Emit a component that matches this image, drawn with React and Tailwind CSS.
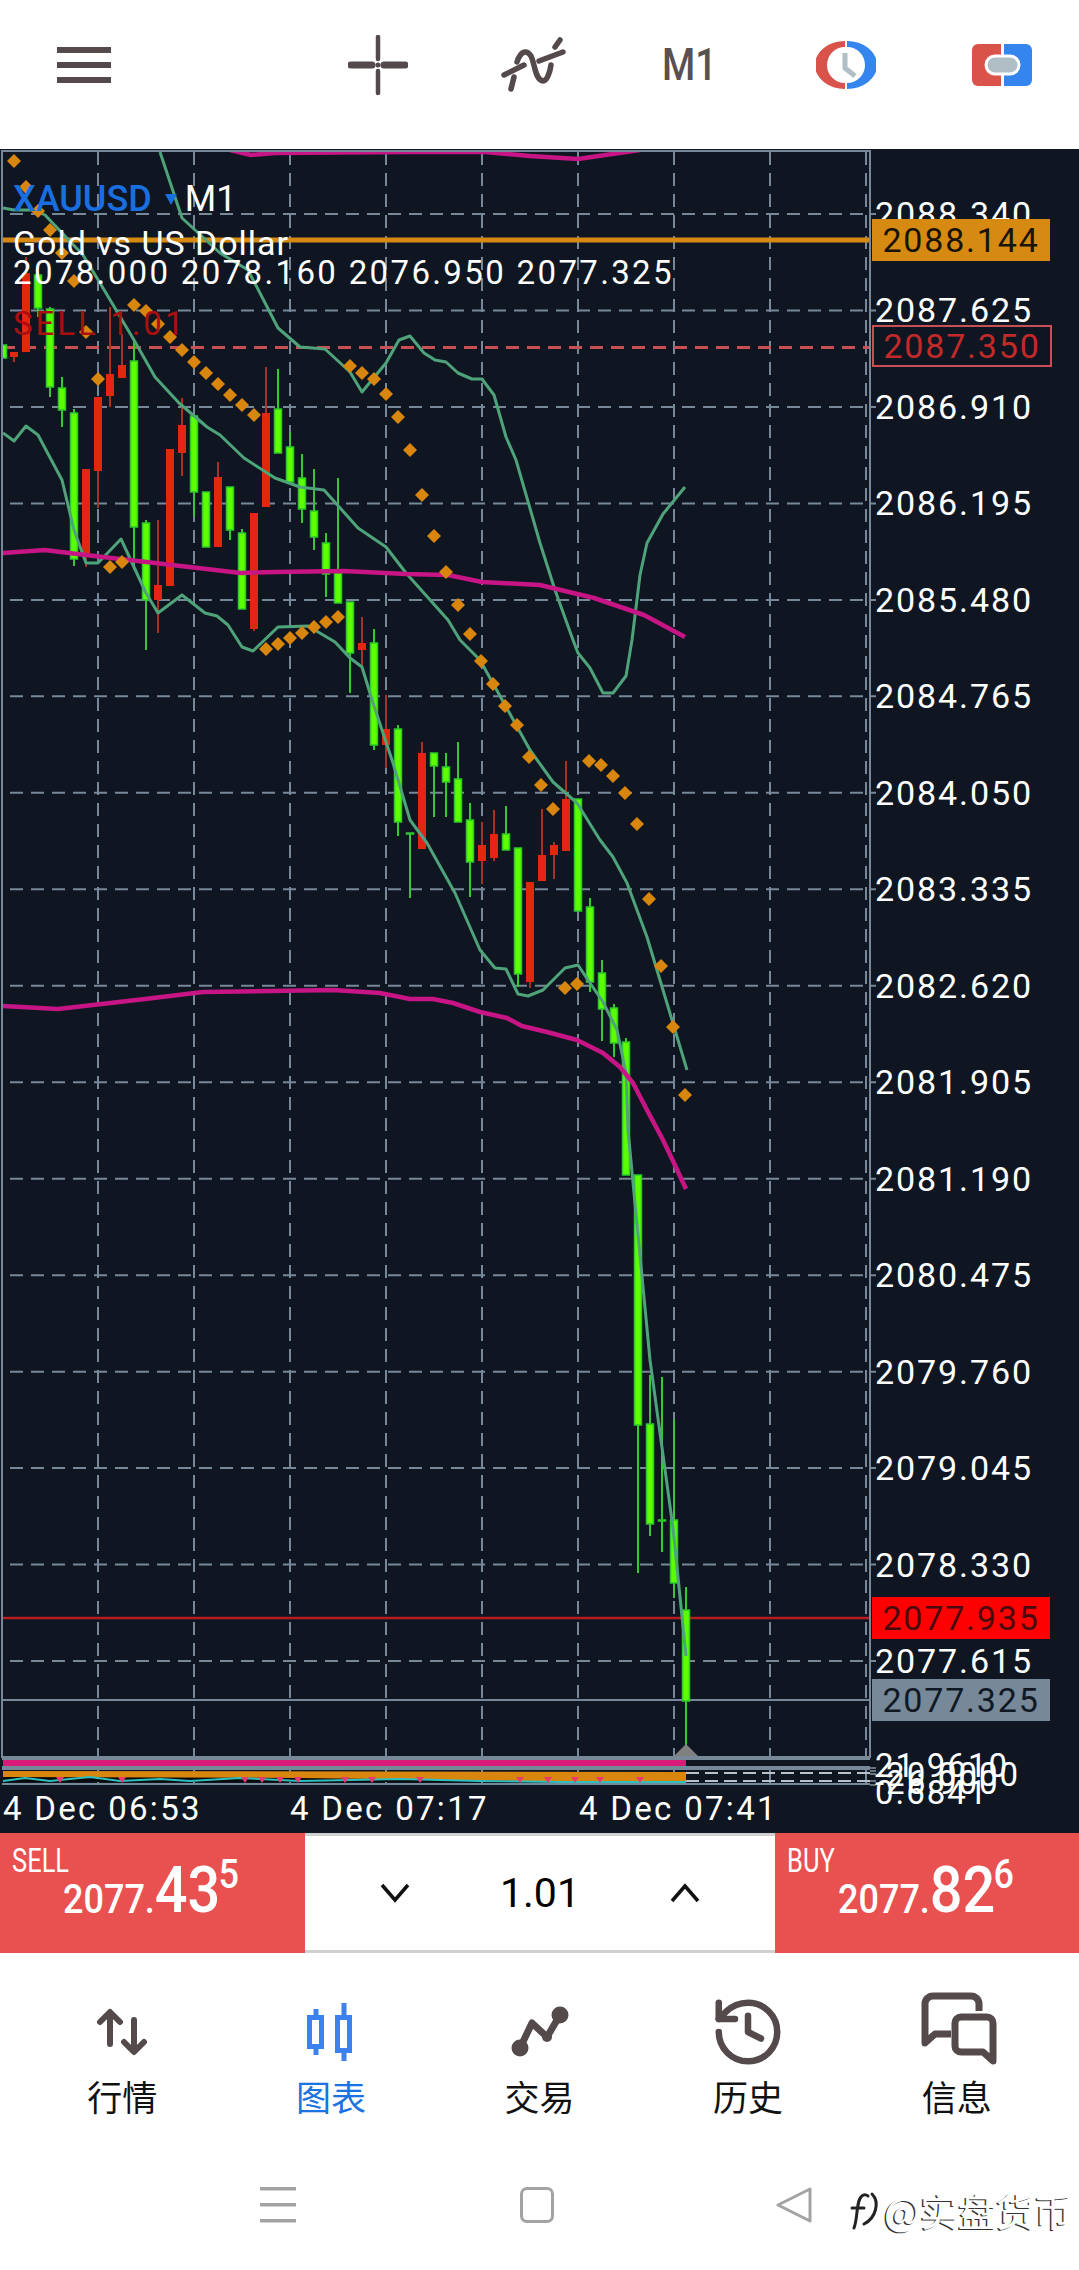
import { History } from 'lucide-react';

const GREY = '#54494b';

// [x, wickTop, bodyTop, bodyBottom, wickBottom, up]
const candles = [
  [3, 345, 345, 358, 358, 1], [14, 352, 352, 357, 362, 0], [26, 257, 273, 352, 352, 0], [38, 272, 275, 308, 317, 1],
  [50, 307, 309, 387, 397, 1], [62, 377, 388, 410, 427, 1], [74, 409, 413, 559, 566, 1], [86, 469, 469, 555, 567, 0],
  [98, 397, 397, 471, 508, 0], [110, 307, 374, 396, 407, 0], [122, 334, 365, 378, 378, 0], [134, 339, 361, 527, 570, 1],
  [146, 520, 523, 600, 650, 1], [158, 520, 585, 600, 633, 0], [170, 449, 449, 586, 586, 0], [182, 398, 425, 453, 476, 0],
  [194, 416, 416, 492, 517, 1], [206, 492, 492, 547, 547, 1], [218, 462, 477, 547, 547, 0], [230, 487, 487, 530, 540, 1],
  [242, 529, 533, 609, 609, 1], [254, 513, 513, 629, 631, 0], [266, 367, 413, 507, 507, 0], [278, 369, 409, 453, 453, 1],
  [290, 432, 447, 482, 482, 1], [302, 454, 478, 509, 523, 1], [314, 469, 511, 537, 550, 1], [326, 533, 543, 574, 597, 1],
  [338, 478, 573, 603, 603, 1], [350, 602, 602, 653, 693, 1], [362, 617, 643, 650, 667, 0], [374, 629, 643, 745, 750, 1],
  [386, 695, 729, 745, 768, 0], [398, 725, 729, 822, 836, 1], [410, 833, 833, 834, 898, 1], [422, 742, 753, 849, 849, 0],
  [434, 753, 753, 766, 817, 1], [446, 753, 767, 782, 817, 1], [458, 742, 779, 822, 822, 1], [470, 803, 820, 862, 897, 1],
  [482, 822, 845, 861, 884, 0], [494, 810, 834, 858, 861, 0], [506, 806, 834, 850, 850, 1], [518, 848, 848, 974, 987, 1],
  [530, 882, 882, 982, 988, 0], [542, 809, 855, 881, 881, 0], [554, 842, 845, 855, 879, 0], [566, 761, 799, 851, 851, 0],
  [578, 799, 799, 911, 911, 1], [590, 898, 907, 982, 992, 1], [602, 960, 973, 1009, 1041, 1], [614, 1004, 1008, 1043, 1057, 1],
  [626, 1038, 1042, 1175, 1175, 1], [638, 1175, 1175, 1425, 1573, 1], [650, 1375, 1424, 1524, 1536, 1], [662, 1377, 1520, 1521, 1552, 1],
  [674, 1419, 1520, 1583, 1598, 1], [686, 1587, 1610, 1701, 1745, 1],
];

const diamonds = [
  [14, 161], [26, 187], [38, 211], [50, 230], [62, 253], [74, 281], [86, 332], [98, 379], [110, 567], [122, 562],
  [134, 305], [146, 311], [158, 324], [170, 337], [182, 350], [194, 362], [206, 373], [218, 384], [230, 395], [242, 405],
  [254, 415], [266, 649], [278, 644], [290, 638], [302, 633], [314, 627], [326, 622], [338, 617], [350, 366], [362, 373],
  [374, 379], [386, 394], [398, 417], [410, 450], [422, 495], [434, 536], [446, 572], [458, 605], [470, 634], [481, 661],
  [493, 684], [505, 706], [517, 725], [529, 757], [541, 785], [553, 809], [565, 988], [577, 984], [589, 761], [601, 765],
  [613, 776], [625, 793], [637, 824], [649, 899], [661, 966], [673, 1027], [685, 1095],
];

const bbUpper = '160,152 182,218 220,253 248,270 278,328 300,347 325,349 350,372 362,392 386,363 399,340 410,336 424,353 435,360 446,362 458,373 472,379 482,379 494,395 506,437 516,460 540,543 555,590 573,640 578,653 590,668 603,693 613,693 626,676 632,640 640,575 647,543 663,514 685,487';
const bbMiddle = '3,208 14,210 34,210 45,215 83,255 100,283 134,340 155,377 179,403 207,427 220,435 244,458 275,478 300,487 324,490 358,528 386,547 406,573 448,620 460,640 480,660 505,705 530,750 553,782 577,803 600,840 613,857 627,883 647,937 663,990 687,1070';
const bbLower = '3,433 14,441 26,426 38,435 62,480 74,530 86,563 98,563 121,539 146,593 158,613 182,595 205,613 217,616 228,625 242,647 253,651 278,627 308,626 335,642 350,658 362,667 373,703 393,763 410,820 427,843 455,893 480,950 495,968 506,969 518,994 528,996 543,990 565,968 578,965 588,980 603,1002 617,1030 626,1073 628,1130 650,1360 673,1528 686,1656';
const maTop = '230,150 251,155 275,153 406,152 485,152 530,156 578,159 619,153 640,150';
const maMid = '3,553 45,550 69,553 103,557 138,561 172,565 241,573 275,572 344,571 406,574 448,575 482,582 540,585 594,598 644,615 685,637';
const maLow = '2,1006 58,1009 145,999 203,992 333,990 380,993 410,999 433,999 453,1003 480,1012 507,1018 522,1026 547,1032 577,1040 603,1053 620,1067 633,1083 647,1110 663,1140 673,1161 686,1189';

const gridX = [98, 194, 290, 386, 482, 578, 674, 770, 866];
const axis = ['2088.340', '2087.625', '2086.910', '2086.195', '2085.480', '2084.765', '2084.050', '2083.335', '2082.620', '2081.905', '2081.190', '2080.475', '2079.760', '2079.045', '2078.330', '2077.615'];
const rowY = (i) => 214 + i * 96.47;

const pinkMarks = [60, 122, 245, 262, 280, 298, 345, 372, 420, 520, 548, 575, 600, 640];

const Chart = () => (
  <svg className="absolute inset-0" width="1079" height="1684" viewBox="0 149 1079 1684">
    <defs>
      <clipPath id="plot">
        <rect x="3" y="152" width="867" height="1604" />
      </clipPath>
    </defs>

    {gridX.map((x) => (
      <g key={x} stroke="#778899" strokeWidth="2">
        <line x1={x} y1="152" x2={x} y2="1756" strokeDasharray="13 8" />
        <line x1={x} y1="1770" x2={x} y2="1790" strokeDasharray="13 8" />
      </g>
    ))}
    {axis.map((_, i) => (
      <line key={i} x1="10" y1={rowY(i)} x2="876" y2={rowY(i)} stroke="#778899" strokeWidth="2" strokeDasharray="13 8" />
    ))}

    <g clipPath="url(#plot)">
      <line x1="2" y1="240" x2="870" y2="240" stroke="#d68a12" strokeWidth="5" />
      <line x1="2" y1="347.5" x2="870" y2="347.5" stroke="#c85054" strokeWidth="3" strokeDasharray="13 8" />
      <line x1="2" y1="1618" x2="870" y2="1618" stroke="#b81c20" strokeWidth="2.5" />
      <line x1="2" y1="1700" x2="870" y2="1700" stroke="#778899" strokeWidth="2" />

      {candles.map(([x, wt, bt, bb, wb, up]) => (
        <g key={x}>
          <line x1={x} y1={wt} x2={x} y2={wb} stroke={up ? '#35c832' : '#a83222'} strokeWidth="2" />
          {up ? (
            <rect x={x - 3.5} y={bt} width="7" height={Math.max(bb - bt, 1)} fill="#5cff00" stroke="#2cc82c" strokeWidth="1.5" />
          ) : (
            <rect x={x - 4} y={bt} width="8" height={Math.max(bb - bt, 1)} fill="#e2260f" />
          )}
        </g>
      ))}

      {[bbUpper, bbMiddle, bbLower].map((p, i) => (
        <polyline key={i} points={p} fill="none" stroke="#4fa37a" strokeWidth="3" strokeLinejoin="round" />
      ))}
      {[maTop, maMid, maLow].map((p, i) => (
        <polyline key={i} points={p} fill="none" stroke="#c71585" strokeWidth="4.5" strokeLinejoin="round" />
      ))}
      {diamonds.map(([x, y]) => (
        <polygon key={`${x}-${y}`} points={`${x},${y - 7} ${x + 7},${y} ${x},${y + 7} ${x - 7},${y}`} fill="#d9860f" />
      ))}
    </g>

    {/* frame */}
    <rect x="2" y="151" width="868" height="1606" fill="none" stroke="#778899" strokeWidth="2" />
    <polygon points="674,1756 686,1744 698,1756" fill="#808080" />

    {/* indicator panels */}
    <rect x="2" y="1756" width="868" height="4" fill="#778899" />
    <rect x="3" y="1760" width="683" height="6" fill="#d81b78" />
    <rect x="2" y="1766" width="868" height="4" fill="#778899" />
    <rect x="3" y="1777" width="683" height="5" fill="#0a0a0a" />
    <polygon points="3,1771 686,1772 686,1783 600,1782 300,1778 3,1777" fill="#d9860f" />
    <polyline points="3,1781 25,1778 50,1781 90,1777 120,1781 160,1779 190,1781 240,1778 300,1781 400,1779 480,1781 560,1782 686,1782" fill="none" stroke="#2fbfc0" strokeWidth="2" />
    {pinkMarks.map((x) => (
      <polygon key={x} points={`${x - 4},1777 ${x + 4},1777 ${x},1783`} fill="#e83a70" />
    ))}
    <line x1="686" y1="1773" x2="870" y2="1773" stroke="#b8c2cc" strokeWidth="2" strokeDasharray="13 6" />
    <line x1="686" y1="1781" x2="870" y2="1781" stroke="#b8c2cc" strokeWidth="2" strokeDasharray="13 6" />
    <rect x="2" y="1783" width="868" height="2" fill="#778899" />
    {[1768, 1771, 1774, 1781, 1785].map((y) => (
      <line key={y} x1="870" y1={y} x2="876" y2={y} stroke="#c8d0d8" strokeWidth="1" />
    ))}
  </svg>
);

const PriceTag = ({ top, className, children }) => (
  <div
    className={`absolute left-[872px] flex h-[42px] w-[178px] items-center justify-center text-[34px] leading-none tracking-[1.8px] ${className}`}
    style={{ top }}
  >
    {children}
  </div>
);

const ChartText = () => (
  <div className="absolute inset-0 overflow-hidden text-white">
    <div className="absolute left-[13px] top-[32px] flex items-center leading-none text-[36px]">
      <span className="font-medium text-[#1a6fe0]">XAUUSD</span>
      <span className="ml-[13px] mr-[8px] h-0 w-0 border-x-[6px] border-t-[11px] border-x-transparent border-t-[#1a6fe0]" />
      <span>M1</span>
    </div>
    <div className="absolute left-[13px] top-[77px] text-[34px] leading-none tracking-[0.95px]">Gold vs US Dollar</div>
    <div className="absolute left-[13px] top-[107px] text-[33px] leading-none tracking-[2.35px] whitespace-nowrap">2078.000 2078.160 2076.950 2077.325</div>
    <div className="absolute left-[13px] top-[158px] text-[33px] leading-none tracking-[3px] text-[#a81010] whitespace-nowrap">SELL 1.01</div>

    {axis.map((v, i) => (
      <div key={v} className="absolute left-[875px] -translate-y-1/2 text-[34px] leading-none tracking-[1.9px]" style={{ top: rowY(i) - 149 }}>
        {v}
      </div>
    ))}

    <PriceTag top={70} className="bg-[#d68a12] text-[#1a1408]">2088.144</PriceTag>
    <PriceTag top={176} className="bg-[#0f1621] border-2 border-[#c85054] text-[#c22a2a] w-[180px]">2087.350</PriceTag>
    <PriceTag top={1448} className="bg-[#ff0000] text-[#4a0a10]">2077.935</PriceTag>
    <PriceTag top={1530} className="bg-[#778899] text-[#101824]">2077.325</PriceTag>

    <div className="absolute left-[875px] top-[1600px] text-[33px] leading-none tracking-[2px] whitespace-nowrap">21.9610</div>
    <div className="absolute left-[875px] top-[1609px] text-[33px] leading-none tracking-[2px] whitespace-nowrap">-20.0000</div>
    <div className="absolute left-[875px] top-[1617px] text-[33px] leading-none tracking-[2px] whitespace-nowrap">-26.900</div>
    <div className="absolute left-[875px] top-[1627px] text-[33px] leading-none tracking-[2px] whitespace-nowrap">0.6841</div>

    <div className="absolute left-0 right-0 top-[1643px] flex pl-[3px] text-[33px] leading-none tracking-[2.3px] whitespace-nowrap">
      <span className="w-[287px]">4 Dec 06:53</span>
      <span className="w-[289px]">4 Dec 07:17</span>
      <span>4 Dec 07:41</span>
    </div>
  </div>
);

const PriceButton = ({ label, big, small, className }) => (
  <div className={`flex h-full shrink-0 flex-col bg-[#e95050] text-white ${className}`}>
    <span className="mt-[14px] ml-[12px] h-[26px] origin-top-left scale-x-[.85] scale-y-[1.1] text-[30px] leading-[26px]">{label}</span>
    <div className="mt-[-14px] ml-[63px] flex origin-bottom-left scale-x-[.9] items-start whitespace-nowrap font-medium leading-none">
      <span className="mt-[21px] text-[40px]">2077.</span>
      <span className="text-[64px]">{big}</span>
      <span className="ml-[-2px] mt-[-4px] text-[40px]">{small}</span>
    </div>
  </div>
);

const TradeBar = () => (
  <div className="flex h-[120px]">
    <PriceButton label="SELL" big="43" small="5" className="w-[305px]" />
    <div className="flex flex-1 items-center justify-between border-y-[3px] border-[#d0d0d0] bg-white px-[75px] text-black">
      <svg width="30" height="20" viewBox="0 0 30 20" fill="none" stroke="#111" strokeWidth="3.5">
        <path d="M2 2 L15 17 L28 2" />
      </svg>
      <span className="text-[41px] leading-none">1.01</span>
      <svg width="30" height="20" viewBox="0 0 30 20" fill="none" stroke="#111" strokeWidth="3.5">
        <path d="M2 18 L15 3 L28 18" />
      </svg>
    </div>
    <PriceButton label="BUY" big="82" small="6" className="w-[304px]" />
  </div>
);

const ArrowsIcon = () => (
  <svg width="60" height="60" viewBox="0 0 60 60" fill="none" stroke={GREY} strokeWidth="6" strokeLinecap="round" strokeLinejoin="round">
    <path d="M18 11 V42 M8 20 L18 10 L28 20" />
    <path d="M42 18 V49 M32 40 L42 50 L52 40" />
  </svg>
);

const CandleIcon = () => (
  <svg width="60" height="60" viewBox="0 0 60 60" fill="none" stroke="#3b82f0" strokeWidth="5">
    <path d="M15 7 V13 M15 46 V53" />
    <rect x="8.5" y="15.5" width="12" height="29" />
    <path d="M43 1 V13 M43 50 V59" />
    <rect x="36.5" y="15.5" width="12" height="33" />
  </svg>
);

const TradeIcon = () => (
  <svg width="60" height="60" viewBox="0 0 60 60" fill="none" stroke={GREY} strokeWidth="7" strokeLinejoin="round">
    <polyline points="11,46 23,21 38,35 51,13" />
    <circle cx="11" cy="46" r="8.5" fill={GREY} stroke="none" />
    <circle cx="51" cy="13" r="8.5" fill={GREY} stroke="none" />
    <circle cx="38" cy="35" r="5" fill={GREY} stroke="none" />
  </svg>
);

const MessageIcon = () => (
  <svg className="shrink-0" width="90" height="80" viewBox="-3 2 90 80" fill="none" stroke={GREY} strokeWidth="7" strokeLinejoin="round">
    <path d="M64 21 V14 a8 8 0 0 0 -8 -8 H18 a8 8 0 0 0 -8 8 V53 L20 44 H36" />
    <path d="M46 27 H72 a6 6 0 0 1 6 6 V71 L68 62 H46 a6 6 0 0 1 -6 -6 V33 a6 6 0 0 1 6 -6 Z" />
  </svg>
);

const tabs = [
  { label: '行情', icon: <ArrowsIcon /> },
  { label: '图表', icon: <CandleIcon />, active: true },
  { label: '交易', icon: <TradeIcon /> },
  { label: '历史', icon: <History className="shrink-0" size={78} strokeWidth={2} color={GREY} /> },
  { label: '信息', icon: <MessageIcon /> },
];

const App = () => {
  return (
    <div className="relative flex h-[2270px] w-[1079px] flex-col overflow-hidden bg-white font-['Roboto',sans-serif]">
      {/* top bar */}
      <div className="flex h-[149px] items-center justify-between pb-[19px] pl-[57px] pr-[47px]">
        <svg width="54" height="36" viewBox="0 0 54 36" fill={GREY}>
          <rect width="54" height="6" />
          <rect y="15" width="54" height="6" />
          <rect y="30" width="54" height="6" />
        </svg>
        <div className="flex items-center">
          <svg width="60" height="60" viewBox="0 0 60 60" stroke={GREY} strokeLinecap="round">
            <path d="M30 2 V24 M30 36 V58" strokeWidth="4.5" />
            <path d="M3 30 H24 M36 30 H57" strokeWidth="7" />
            <circle cx="30" cy="30" r="2.5" fill={GREY} stroke="none" />
          </svg>
          <svg className="ml-[93px]" width="65" height="60" viewBox="20 15 65 60" fill="none" stroke={GREY} strokeWidth="5.5" strokeLinecap="round">
            <path d="M23 55 L43 45 M58 41 L82 32" />
            <path d="M30 69 L33 57 M36 42 C40 30 46 30 50 36 C54 44 54 60 62 61 C66 61 69 52 70 45 M74 27 L79 20" />
          </svg>
          <span className="ml-[96px] w-[54px] origin-center scale-y-[1.15] text-[38px] font-medium leading-none text-[#5a5052]">M1</span>
          <svg className="ml-[100px]" width="60" height="48" viewBox="0 0 60 48">
            <path d="M29 0 A30 24 0 0 0 29 48 V42 A18 18 0 0 1 29 6 Z" fill="#d9534a" />
            <path d="M31 0 A30 24 0 0 1 31 48 V42 A18 18 0 0 0 31 6 Z" fill="#3585ee" />
            <path d="M29 12 V27 L39 35" fill="none" stroke="#b0bec5" strokeWidth="5" />
          </svg>
          <svg className="ml-[96px]" width="60" height="42" viewBox="0 0 60 42">
            <path d="M6 0 H29 V42 H6 a6 6 0 0 1 -6 -6 V6 a6 6 0 0 1 6 -6 Z" fill="#d9534a" />
            <path d="M32 0 H54 a6 6 0 0 1 6 6 V36 a6 6 0 0 1 -6 6 H32 Z" fill="#3585ee" />
            <rect x="14" y="12" width="33" height="18" rx="9" fill="#b0bec5" stroke="#fff" strokeWidth="3" />
          </svg>
        </div>
      </div>

      {/* chart */}
      <div className="relative h-[1684px] shrink-0 bg-[#0f1621]">
        <Chart />
        <ChartText />
      </div>

      <TradeBar />

      {/* tabs */}
      <div className="grid grid-cols-5 px-[18px] pt-[44px] font-['Noto_Sans_CJK_SC',sans-serif]">
        {tabs.map((t) => (
          <div key={t.label} className="flex flex-col items-center">
            <div className="flex h-[70px] items-center justify-center">{t.icon}</div>
            <span className={`mt-[9px] text-[35px] leading-[40px] ${t.active ? 'text-[#1a73e0]' : 'text-[#111]'}`}>{t.label}</span>
          </div>
        ))}
      </div>

      {/* system nav */}
      <div className="flex flex-1 items-center pl-[260px] pt-[24px]">
        <svg width="36" height="36" viewBox="0 0 36 36" fill="#a3a3a3">
          <rect width="36" height="3.5" />
          <rect y="16" width="36" height="3.5" />
          <rect y="32" width="36" height="3.5" />
        </svg>
        <div className="ml-[224px] h-[36px] w-[34px] rounded-[7px] border-[3px] border-[#a3a3a3]" />
        <svg className="ml-[222px]" width="36" height="36" viewBox="0 0 36 36" fill="none" stroke="#a3a3a3" strokeWidth="3" strokeLinejoin="round">
          <path d="M34 2 V34 L2 18 Z" />
        </svg>
      </div>

      {/* watermark */}
      <div className="absolute left-[846px] top-[2188px] flex items-center">
        <svg width="38" height="44" viewBox="0 0 38 44" fill="none" stroke="#222" strokeWidth="3" strokeLinecap="round">
          <path d="M8 40 C12 30 10 12 16 8 C18 6 21 7 22 8 M6 20 H18" />
          <path d="M26 6 C34 14 30 30 18 36" />
        </svg>
        <span className="text-[38px] leading-none text-white font-['Noto_Sans_CJK_SC',sans-serif] [text-shadow:-1.5px_1px_0_#333]">@实盘货币</span>
      </div>
    </div>
  );
};

export default App;
